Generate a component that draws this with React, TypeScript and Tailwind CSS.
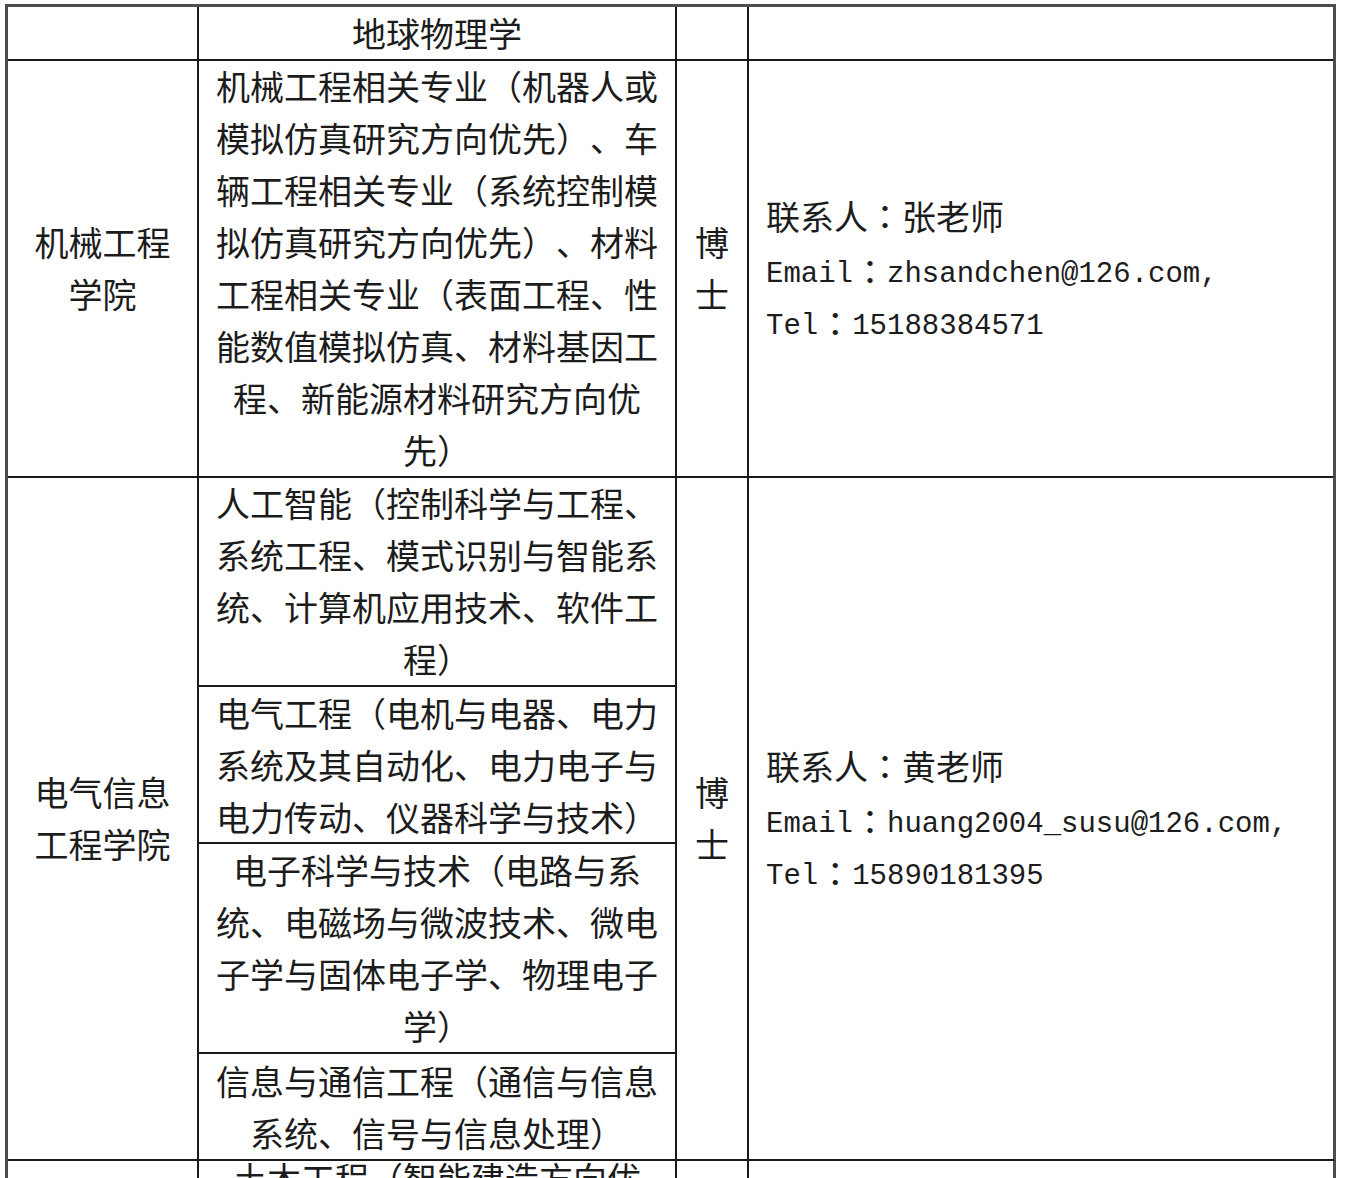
import React from "react";

type Block = { lines: string[]; h: string };

const cjk = "font-['Noto_Sans_CJK_SC',sans-serif]";
const mono = "font-['Liberation_Mono','Noto_Sans_CJK_SC',monospace]";

const mechLines = [
  "机械工程相关专业（机器人或",
  "模拟仿真研究方向优先）、车",
  "辆工程相关专业（系统控制模",
  "拟仿真研究方向优先）、材料",
  "工程相关专业（表面工程、性",
  "能数值模拟仿真、材料基因工",
  "程、新能源材料研究方向优",
  "先）",
];

const elecBlocks: Block[] = [
  {
    h: "h-[210px]",
    lines: [
      "人工智能（控制科学与工程、",
      "系统工程、模式识别与智能系",
      "统、计算机应用技术、软件工",
      "程）",
    ],
  },
  {
    h: "h-[157px]",
    lines: [
      "电气工程（电机与电器、电力",
      "系统及其自动化、电力电子与",
      "电力传动、仪器科学与技术）",
    ],
  },
  {
    h: "h-[210px]",
    lines: [
      "电子科学与技术（电路与系",
      "统、电磁场与微波技术、微电",
      "子学与固体电子学、物理电子",
      "学）",
    ],
  },
  {
    h: "h-[107px]",
    lines: ["信息与通信工程（通信与信息", "系统、信号与信息处理）"],
  },
];

const Lines = ({ lines }: { lines: string[] }) => (
  <div className="flex flex-col items-center">
    {lines.map((l, i) => (
      <div key={i} className="whitespace-nowrap leading-[52px]">
        {l}
      </div>
    ))}
  </div>
);

// full-width colon, centred in its box like the original document font
const Colon = () => (
  <span className="font-['Noto_Sans_CJK_TC',sans-serif] leading-[52px]">：</span>
);

// colon that follows latin text sits a little lower
const LatinColon = () => (
  <span className="font-['Noto_Sans_CJK_TC',sans-serif] align-[-3px] leading-[52px]">：</span>
);

const Latin = ({ children }: { children: React.ReactNode }) => (
  <span className={`${mono} text-[29px] leading-[52px]`}>{children}</span>
);

const Contact = ({ name, email, tel }: { name: string; email: string; tel: string }) => (
  <div className="flex flex-col pl-[17px]">
    <div className="h-[52px] whitespace-nowrap leading-[52px]">
      联系人<Colon />
      {name}
    </div>
    <div className="h-[52px] whitespace-nowrap leading-[52px]">
      <Latin>Email</Latin>
      <LatinColon />
      <Latin>{email}</Latin>
    </div>
    <div className="h-[52px] whitespace-nowrap leading-[52px]">
      <Latin>Tel</Latin>
      <LatinColon />
      <Latin>{tel}</Latin>
    </div>
  </div>
);

const Degree = () => (
  <div className="flex flex-col items-center">
    <div className="leading-[52px]">博</div>
    <div className="leading-[52px]">士</div>
  </div>
);

const rowGrid = "grid grid-cols-[191px_478px_72px_587px]";

export default function App() {
  return (
    <div
      className={`h-[1178px] overflow-hidden bg-white pl-[5px] pt-[4px] text-[34px] text-[#1c1c1c] [text-spacing-trim:space-all] ${cjk}`}
    >
      <div className="w-[1331px] border-l-[3px] border-t-[3px] border-[#4d4d4d]">
        {/* header row */}
        <div className={`${rowGrid} h-[53px]`}>
          <div className="border-b-2 border-r-2 border-[#1a1a1a]" />
          <div className="flex items-center justify-center border-b-2 border-r-2 border-[#1a1a1a] leading-[52px]">
            地球物理学
          </div>
          <div className="border-b-2 border-r-2 border-[#1a1a1a]" />
          <div className="border-b-2 border-r-[3px] border-b-[#1a1a1a] border-r-[#4d4d4d]" />
        </div>

        {/* mechanical engineering */}
        <div className={`${rowGrid} h-[417px]`}>
          <div className="flex items-center justify-center border-b-2 border-r-2 border-[#1a1a1a]">
            <Lines lines={["机械工程", "学院"]} />
          </div>
          <div className="flex items-center justify-center border-b-2 border-r-2 border-[#1a1a1a]">
            <Lines lines={mechLines} />
          </div>
          <div className="flex items-center justify-center border-b-2 border-r-2 border-[#1a1a1a]">
            <Degree />
          </div>
          <div className="flex items-center border-b-2 border-r-[3px] border-b-[#1a1a1a] border-r-[#4d4d4d]">
            <Contact name="张老师" email="zhsandchen@126.com," tel="15188384571" />
          </div>
        </div>

        {/* electrical & information engineering */}
        <div className={`${rowGrid} h-[684px]`}>
          <div className="flex items-center justify-center border-b-2 border-r-2 border-[#1a1a1a]">
            <Lines lines={["电气信息", "工程学院"]} />
          </div>
          <div className="flex flex-col border-r-2 border-[#1a1a1a]">
            {elecBlocks.map((b, i) => (
              <div
                key={i}
                className={`${b.h} flex items-center justify-center border-b-2 border-[#1a1a1a]`}
              >
                <Lines lines={b.lines} />
              </div>
            ))}
          </div>
          <div className="flex items-center justify-center border-b-2 border-r-2 border-[#1a1a1a]">
            <Degree />
          </div>
          <div className="flex items-center border-b-2 border-r-[3px] border-b-[#1a1a1a] border-r-[#4d4d4d]">
            <Contact name="黄老师" email="huang2004_susu@126.com," tel="15890181395" />
          </div>
        </div>

        {/* civil engineering (cut off by the window) */}
        <div className={`${rowGrid} h-[300px]`}>
          <div className="border-r-2 border-[#1a1a1a]" />
          <div className="flex justify-center border-r-2 border-[#1a1a1a]">
            <div className="-mt-[9px]">
              <Lines lines={["土木工程（智能建造方向优", "先）"]} />
            </div>
          </div>
          <div className="border-r-2 border-[#1a1a1a]" />
          <div className="border-r-[3px] border-[#4d4d4d]" />
        </div>
      </div>
    </div>
  );
}
